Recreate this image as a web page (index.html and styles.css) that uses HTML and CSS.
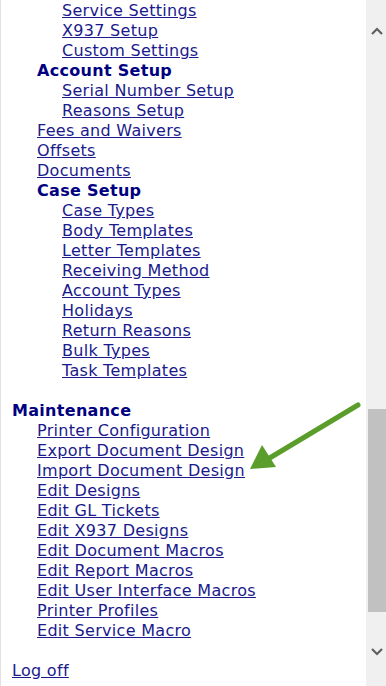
FILE: index.html
```html
<!DOCTYPE html>
<html lang="en">
<head>
  <meta charset="UTF-8">
  <title>Menu</title>
  <link rel="stylesheet" href="styles.css">
</head>
<body>
  <div class="frame">
    <div class="menu">
      <ul class="tree">
        <li class="lvl2"><a href="#">Service Settings</a></li>
        <li class="lvl2"><a href="#">X937 Setup</a></li>
        <li class="lvl2"><a href="#">Custom Settings</a></li>
        <li class="lvl1 head">Account Setup</li>
        <li class="lvl2"><a href="#">Serial Number Setup</a></li>
        <li class="lvl2"><a href="#">Reasons Setup</a></li>
        <li class="lvl1"><a href="#">Fees and Waivers</a></li>
        <li class="lvl1"><a href="#">Offsets</a></li>
        <li class="lvl1"><a href="#">Documents</a></li>
        <li class="lvl1 head">Case Setup</li>
        <li class="lvl2"><a href="#">Case Types</a></li>
        <li class="lvl2"><a href="#">Body Templates</a></li>
        <li class="lvl2"><a href="#">Letter Templates</a></li>
        <li class="lvl2"><a href="#">Receiving Method</a></li>
        <li class="lvl2"><a href="#">Account Types</a></li>
        <li class="lvl2"><a href="#">Holidays</a></li>
        <li class="lvl2"><a href="#">Return Reasons</a></li>
        <li class="lvl2"><a href="#">Bulk Types</a></li>
        <li class="lvl2"><a href="#">Task Templates</a></li>
      </ul>

      <ul class="tree section">
        <li class="lvl0 head">Maintenance</li>
        <li class="lvl1"><a href="#">Printer Configuration</a></li>
        <li class="lvl1"><a href="#">Export Document Design</a></li>
        <li class="lvl1"><a href="#">Import Document Design</a></li>
        <li class="lvl1"><a href="#">Edit Designs</a></li>
        <li class="lvl1"><a href="#">Edit GL Tickets</a></li>
        <li class="lvl1"><a href="#">Edit X937 Designs</a></li>
        <li class="lvl1"><a href="#">Edit Document Macros</a></li>
        <li class="lvl1"><a href="#">Edit Report Macros</a></li>
        <li class="lvl1"><a href="#">Edit User Interface Macros</a></li>
        <li class="lvl1"><a href="#">Printer Profiles</a></li>
        <li class="lvl1"><a href="#">Edit Service Macro</a></li>
      </ul>

      <ul class="tree section">
        <li class="lvl0"><a href="#">Log off</a></li>
      </ul>

      <!-- callout arrow pointing at Import Document Design -->
      <svg class="callout" width="120" height="80" viewBox="0 0 120 80">
        <line x1="108" y1="6" x2="18" y2="60" stroke="#5b9d2b" stroke-width="5" stroke-linecap="round"/>
        <polygon points="0,70 12,46 26,68" fill="#5b9d2b"/>
      </svg>
    </div>

    <div class="scrollbar">
      <div class="sb-btn">
        <svg width="12" height="8" viewBox="0 0 12 8"><path d="M1 7 L6 2 L11 7" fill="none" stroke="#606060" stroke-width="2.2"/></svg>
      </div>
      <div class="sb-track">
        <div class="sb-thumb"></div>
      </div>
      <div class="sb-btn down">
        <svg width="12" height="8" viewBox="0 0 12 8"><path d="M1 1 L6 6 L11 1" fill="none" stroke="#606060" stroke-width="2.2"/></svg>
      </div>
    </div>
  </div>
</body>
</html>
```

FILE: styles.css
```css
body {
  margin: 0;
  background: #fff;
  font-family: 'DejaVu Sans', Verdana, sans-serif;
  font-size: 16px;
  line-height: 20px;
  letter-spacing: 0.3px;
}
.frame {
  display: flex;
  height: 686px;
  overflow: hidden;
}
.menu {
  position: relative;
  flex: 1;
  padding-top: 1px;
  border-left: 1px solid #e2e2e2;
}
.tree {
  list-style: none;
  margin: 0;
  padding: 0;
}
.section {
  margin-top: 20px;
}
.tree li {
  height: 20px;
  white-space: nowrap;
}
.lvl0 { padding-left: 11px; }
.lvl1 { padding-left: 36px; }
.lvl2 { padding-left: 61px; }
.head {
  font-weight: bold;
  color: #000080;
}
a {
  color: #1a1a8c;
  text-decoration: underline;
}
.callout {
  position: absolute;
  left: 249px;
  top: 399px;
}
.scrollbar {
  width: 20px;
  background: #f0f0f0;
  display: flex;
  flex-direction: column;
}
.sb-btn {
  height: 62px;
  display: flex;
  justify-content: center;
  align-items: center;
  padding-left: 2px;
}
.sb-btn.down {
  height: 60px;
  align-items: flex-end;
  padding-bottom: 30px;
  box-sizing: border-box;
}
.sb-track {
  flex: 1;
  padding-top: 347px;
}
.sb-thumb {
  margin-left: 2px;
  height: 203px;
  background: #c1c1c1;
}
```
